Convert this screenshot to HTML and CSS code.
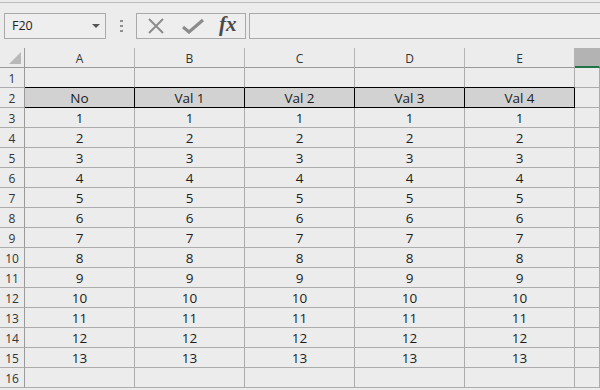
FILE: index.html
```html
<!DOCTYPE html>
<html lang="en">
<head>
  <meta charset="UTF-8">
  <meta name="viewport" content="width=device-width, initial-scale=1.0">
  <title>Sheet1</title>
  <link rel="stylesheet" href="styles.css">
</head>
<body>
  <div class="ribbon-edge"></div>

  <div class="formula-bar">
    <div class="name-box">
      <span>F20</span>
      <span class="drop"></span>
    </div>
    <div class="grip"><i></i><i></i><i></i></div>
    <div class="fx-box">
      <svg class="ico" width="18" height="16" viewBox="0 0 18 16">
        <path d="M2 1 L16 15 M16 1 L2 15" stroke="#8c8c8c" stroke-width="2" fill="none"/>
      </svg>
      <svg class="ico" width="22" height="16" viewBox="0 0 22 16">
        <path d="M1 9 L7 14 L21 2" stroke="#8c8c8c" stroke-width="3.2" fill="none"/>
      </svg>
      <span class="fx">fx</span>
    </div>
    <div class="formula-input"></div>
  </div>

  <div class="sheet">
    <div class="row head">
      <div class="corner"><span class="tri"></span></div>
      <div>A</div><div>B</div><div>C</div><div>D</div><div>E</div><div class="picked"></div>
    </div>
    <div class="row above-band"><div class="num">1</div><div></div><div></div><div></div><div></div><div></div><div class="free"></div></div>
    <div class="row band"><div class="num">2</div><div>No</div><div>Val 1</div><div>Val 2</div><div>Val 3</div><div>Val 4</div><div class="free"></div></div>
    <div class="row"><div class="num">3</div><div>1</div><div>1</div><div>1</div><div>1</div><div>1</div><div></div></div>
    <div class="row"><div class="num">4</div><div>2</div><div>2</div><div>2</div><div>2</div><div>2</div><div></div></div>
    <div class="row"><div class="num">5</div><div>3</div><div>3</div><div>3</div><div>3</div><div>3</div><div></div></div>
    <div class="row"><div class="num">6</div><div>4</div><div>4</div><div>4</div><div>4</div><div>4</div><div></div></div>
    <div class="row"><div class="num">7</div><div>5</div><div>5</div><div>5</div><div>5</div><div>5</div><div></div></div>
    <div class="row"><div class="num">8</div><div>6</div><div>6</div><div>6</div><div>6</div><div>6</div><div></div></div>
    <div class="row"><div class="num">9</div><div>7</div><div>7</div><div>7</div><div>7</div><div>7</div><div></div></div>
    <div class="row"><div class="num">10</div><div>8</div><div>8</div><div>8</div><div>8</div><div>8</div><div></div></div>
    <div class="row"><div class="num">11</div><div>9</div><div>9</div><div>9</div><div>9</div><div>9</div><div></div></div>
    <div class="row"><div class="num">12</div><div>10</div><div>10</div><div>10</div><div>10</div><div>10</div><div></div></div>
    <div class="row"><div class="num">13</div><div>11</div><div>11</div><div>11</div><div>11</div><div>11</div><div></div></div>
    <div class="row"><div class="num">14</div><div>12</div><div>12</div><div>12</div><div>12</div><div>12</div><div></div></div>
    <div class="row"><div class="num">15</div><div>13</div><div>13</div><div>13</div><div>13</div><div>13</div><div></div></div>
    <div class="row"><div class="num">16</div><div></div><div></div><div></div><div></div><div></div><div></div></div>
  </div>
</body>
</html>
```

FILE: styles.css
```css
* {
  box-sizing: border-box;
}

body {
  margin: 0;
  width: 600px;
  height: 390px;
  overflow: hidden;
  background: #ececec;
  font-family: "Open Sans", "Liberation Sans", sans-serif;
  color: #1c1c1c;
}

.ribbon-edge {
  height: 3px;
  border-bottom: 1px solid #bcbcbc;
}

/* formula bar */
.formula-bar {
  display: flex;
  align-items: center;
  height: 45px;
  padding: 0 0 0 4px;
}

.name-box,
.fx-box,
.formula-input {
  height: 26px;
  border: 1px solid #a9a9a9;
  background: #eeeeee;
}

.name-box {
  width: 102px;
  display: flex;
  align-items: center;
  justify-content: space-between;
  padding: 0 5px 0 7px;
  font-size: 12.5px;
  color: #222;
}

.drop {
  width: 0;
  height: 0;
  border-left: 4px solid transparent;
  border-right: 4px solid transparent;
  border-top: 4px solid #555;
}

.grip {
  display: flex;
  flex-direction: column;
  gap: 3px;
  margin: 0 13px 0 14px;
}

.grip i {
  width: 3px;
  height: 2px;
  background: #8f8f8f;
}

.fx-box {
  width: 110px;
  display: flex;
  align-items: center;
  padding-left: 10px;
}

.ico {
  margin-right: 17px;
}

.ico + .ico {
  margin-right: 15px;
}

.fx {
  font-family: "Liberation Serif", "DejaVu Serif", serif;
  font-style: italic;
  font-weight: bold;
  font-size: 21px;
  color: #4a4a4a;
  line-height: 1;
  margin-top: -3px;
}

.formula-input {
  flex: 1;
  margin-left: 3px;
  border-right: none;
}

/* grid */
.row {
  display: grid;
  grid-template-columns: 25px repeat(5, 110px) 1fr;
  height: 20px;
}

.row > div {
  display: flex;
  align-items: center;
  justify-content: center;
  border-right: 1px solid #acacac;
  border-bottom: 1px solid #acacac;
  font-size: 13.5px;
  padding-top: 1px;
}

.row > .num {
  font-size: 12px;
  color: #333;
  border-right-color: #9a9a9a;
}

.head > div {
  font-size: 12px;
  color: #333;
  border-bottom-color: #9a9a9a;
  border-right-color: #b5b5b5;
}

.head > .corner {
  position: relative;
  border-right-color: #9a9a9a;
}

.tri {
  position: absolute;
  right: 3px;
  bottom: 3px;
  width: 0;
  height: 0;
  border-left: 12px solid transparent;
  border-bottom: 12px solid #b9b9b9;
}

.head > .picked {
  background: #b3b3b3;
  border-bottom: 2px solid #217346;
}

.above-band > div:not(.num):not(.free) {
  border-bottom-color: #000;
}

.band > div {
  background: #d2d2d2;
  border-right-color: #000;
  border-bottom-color: #000;
}

.band > .num {
  background: none;
  border-bottom-color: #acacac;
}

.band > .free {
  background: none;
  border-right-color: #acacac;
  border-bottom-color: #acacac;
}
```
